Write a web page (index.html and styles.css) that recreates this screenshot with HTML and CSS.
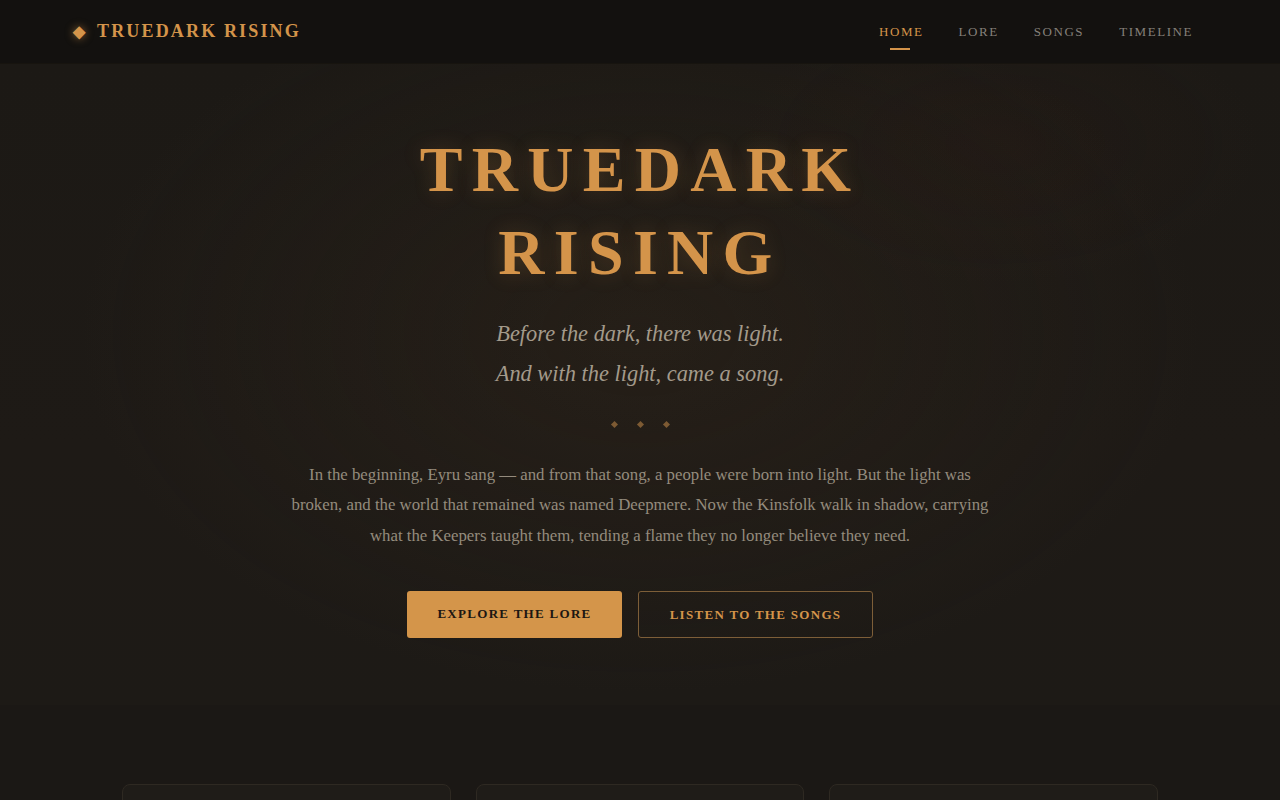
FILE: index.html
```html
<!DOCTYPE html>
<html lang="en">
<head>
    <meta charset="UTF-8">
    <meta name="viewport" content="width=device-width, initial-scale=1.0">
    <title>Truedark Rising</title>
    <link rel="stylesheet" href="styles.css">
</head>
<body>
    <header class="site-header">
        <div class="header-inner">
            <a class="logo" href="#"><span class="logo-mark">&#9670;</span>TRUEDARK RISING</a>
            <nav class="nav">
                <a href="#" class="active">HOME</a>
                <a href="#">LORE</a>
                <a href="#">SONGS</a>
                <a href="#">TIMELINE</a>
            </nav>
        </div>
    </header>

    <section class="hero">
        <h1 class="hero-title">TRUEDARK<br>RISING</h1>
        <p class="hero-sub">Before the dark, there was light.<br>And with the light, came a song.</p>
        <div class="divider">
            <span></span><span></span><span></span>
        </div>
        <p class="hero-text">In the beginning, Eyru sang — and from that song, a people were born into light. But the light was broken, and the world that remained was named Deepmere. Now the Kinsfolk walk in shadow, carrying what the Keepers taught them, tending a flame they no longer believe they need.</p>
        <div class="hero-actions">
            <a href="#" class="btn btn-fill">EXPLORE THE LORE</a>
            <a href="#" class="btn btn-outline">LISTEN TO THE SONGS</a>
        </div>
    </section>

    <section class="features">
        <div class="card"></div>
        <div class="card"></div>
        <div class="card"></div>
    </section>
</body>
</html>
```

FILE: styles.css
```css
body {
    margin: 0;
    padding: 0;
    background: #1b1815;
    color: #9a9080;
    font-family: 'Liberation Serif', 'Times New Roman', serif;
}
a {
    text-decoration: none;
}
.site-header {
    background: #13110f;
    height: 64px;
    border-bottom: 1px solid #17140f;
    box-sizing: border-box;
}
.header-inner {
    box-sizing: border-box;
    max-width: 1200px;
    margin: 0 auto;
    padding: 0 32px;
    height: 100%;
    display: flex;
    align-items: center;
    justify-content: space-between;
}
.logo {
    font-size: 18px;
    font-weight: bold;
    letter-spacing: 0.12em;
    color: #d4944a;
    display: flex;
    align-items: center;
    margin-left: 1px;
}
.logo-mark {
    font-size: 16px;
    letter-spacing: 0;
    margin-right: 12px;
    text-shadow: 0 0 8px rgba(212, 148, 74, 0.6);
}
.nav {
    display: flex;
    gap: 35px;
    margin-right: 15px;
}
.nav a {
    position: relative;
    font-size: 13px;
    letter-spacing: 0.12em;
    color: #85807a;
    padding: 6px 0;
}
.nav a.active {
    color: #d4944a;
}
.nav a.active::after {
    content: '';
    position: absolute;
    left: 50%;
    bottom: -4px;
    width: 20px;
    height: 2px;
    margin-left: -11px;
    background: #d4944a;
}
.hero {
    text-align: center;
    padding: 64px 32px 67px;
    background:
        radial-gradient(ellipse 260px 140px at 1000px 80px, rgba(60, 28, 18, 0.12), transparent),
        radial-gradient(ellipse 560px 360px at 50% 42%, rgba(55, 42, 28, 0.3), transparent),
        linear-gradient(180deg, #1c1915 0%, #1e1a16 60%, #1d1a16 100%);
}
.hero-title {
    margin: 0;
    font-size: 64px;
    line-height: 1.3;
    font-weight: bold;
    letter-spacing: 0.145em;
    color: #d4944a;
    text-shadow: 0 0 20px rgba(212, 148, 74, 0.22);
}
.hero-sub {
    margin: 20px 0 0;
    font-size: 22.4px;
    line-height: 1.75;
    font-style: italic;
    color: #a39a8b;
}
.divider {
    display: flex;
    justify-content: center;
    gap: 21px;
    margin: 28px 0 31px;
    height: 8px;
    align-items: center;
}
.divider span {
    width: 5px;
    height: 5px;
    background: #7d5a33;
    transform: rotate(45deg);
}
.hero-text {
    max-width: 700px;
    margin: 0 auto;
    font-size: 16.8px;
    line-height: 1.82;
    color: #948b7d;
}
.hero-actions {
    display: flex;
    justify-content: center;
    gap: 16px;
    margin-top: 40px;
}
.btn {
    display: inline-block;
    box-sizing: border-box;
    height: 47px;
    line-height: 45px;
    font-size: 13px;
    font-weight: bold;
    letter-spacing: 0.1em;
    border-radius: 3px;
    border: 1px solid transparent;
}
.btn-fill {
    width: 215px;
    background: #d4954a;
    color: #1c1712;
    line-height: 43px;
}
.btn-outline {
    width: 235px;
    border-color: #7d5e38;
    color: #d4944a;
}
.features {
    max-width: 1036px;
    margin: 0 auto;
    padding: 79px 0 40px;
    display: grid;
    grid-template-columns: repeat(3, 1fr);
    gap: 25px;
}
.card {
    height: 200px;
    background: #1f1c18;
    border: 1px solid #2e2922;
    border-radius: 8px;
}
```
